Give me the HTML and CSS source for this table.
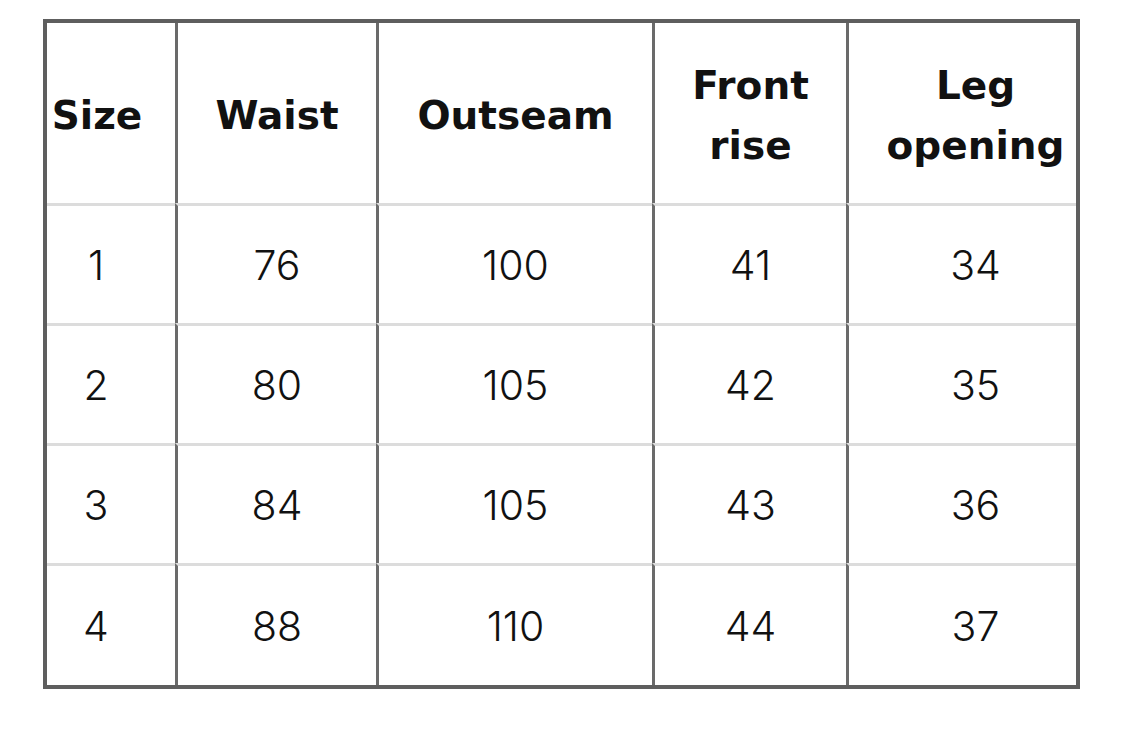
FILE: index.html
```html
<!DOCTYPE html>
<html>
<head>
<meta charset="utf-8">
<link rel="stylesheet" href="styles.css">
</head>
<body>
<div class="page">
<table class="size-table">
  <colgroup>
    <col class="c1"><col class="c2"><col class="c3"><col class="c4"><col class="c5">
  </colgroup>
  <thead>
    <tr>
      <th class="first">Size</th>
      <th>Waist</th>
      <th>Outseam</th>
      <th>Front<br>rise</th>
      <th class="last">Leg<br>opening</th>
    </tr>
  </thead>
  <tbody>
    <tr><td class="first">1</td><td>76</td><td>100</td><td>41</td><td class="last">34</td></tr>
    <tr><td class="first">2</td><td>80</td><td>105</td><td>42</td><td class="last">35</td></tr>
    <tr><td class="first">3</td><td>84</td><td>105</td><td>43</td><td class="last">36</td></tr>
    <tr><td class="first">4</td><td>88</td><td>110</td><td>44</td><td class="last">37</td></tr>
  </tbody>
</table>
</div>
</body>
</html>
```

FILE: styles.css
```css
html, body {
  margin: 0;
  padding: 0;
  background: #ffffff;
}
.page {
  padding: 19px 0 0 43px;
}
.size-table {
  border-collapse: separate;
  border-spacing: 0;
  table-layout: fixed;
  width: 1037px;
  border: 4px solid #5e5e5e;
  color: #111111;
}
.c1 { width: 128px; }
.c2 { width: 201px; }
.c3 { width: 276px; }
.c4 { width: 194px; }
.c5 { width: 230px; }
.size-table th,
.size-table td {
  box-sizing: border-box;
  text-align: center;
  vertical-align: middle;
  padding: 0;
  white-space: nowrap;
}
.size-table th + th,
.size-table td + td {
  border-left: 3px solid #6a6a6a;
}
.size-table th {
  height: 180px;
  padding-top: 6px;
  font-family: "DejaVu Sans", sans-serif;
  font-weight: 700;
  font-size: 39px;
  line-height: 60px;
}
.size-table td {
  height: 120px;
  border-top: 3px solid #dcdcdc;
  font-family: "Inter", sans-serif;
  font-weight: 300;
  font-size: 41px;
}
.size-table tbody tr:last-child td {
  height: 122px;
}
.size-table .first {
  padding-right: 30px;
}
.size-table .last {
  padding-left: 26px;
}
.size-table th.first {
  padding-right: 28px;
}
```
